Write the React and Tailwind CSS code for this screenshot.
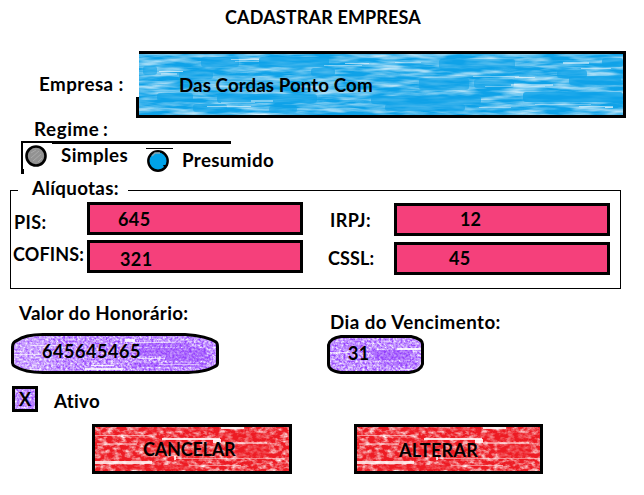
const TONES = {
  blue: { base: '#0fa2e8', freq: '0.03 0.22', seed: 7, matrix: '0 0 0 0 1  0 0 0 0 1  0 0 0 0 1  1.5 0 0 0 -0.52' },
  purple: { base: '#9440ff', freq: '0.42 0.5', seed: 3, matrix: '0 0 0 0 1  0 0 0 0 1  0 0 0 0 1  1.6 0 0 0 -0.37' },
  red: { base: '#ed1c24', freq: '0.16 0.26', seed: 12, matrix: '0 0 0 0 1  0 0 0 0 1  0 0 0 0 1  1.9 0 0 0 -0.75' },
};

// Crayon shading: a flat tone, grainy white noise and hand-placed strokes [x, y, width, height, opacity, colour].
function Crayon({ id, tone, strokes }) {
  const t = TONES[tone];
  return (
    <svg className="absolute inset-0 h-full w-full" aria-hidden="true">
      <filter id={id} x="0" y="0" width="100%" height="100%" colorInterpolationFilters="sRGB">
        <feTurbulence type="fractalNoise" baseFrequency={t.freq} numOctaves="3" seed={t.seed} />
        <feColorMatrix type="matrix" values={t.matrix} />
      </filter>
      <rect width="100%" height="100%" fill={t.base} />
      <rect width="100%" height="100%" filter={`url(#${id})`} />
      {strokes.map(([x, y, w, h, o, c], i) => (
        <rect key={i} x={x} y={y} width={w} height={h} rx={c && h > 3 ? 3 : 0} opacity={o} fill={c || '#fff'} />
      ))}
    </svg>
  );
}

const B = '#0fa2e8';
const blueStrokes = [
  [62, 3, 38, 10, 0.65, B], [120, 3, 70, 10, 0.7, B], [4, 12, 14, 9, 0.6, B], [172, 14, 24, 8, 0.65, B],
  [40, 17, 34, 8, 0.6, B], [18, 39, 36, 8, 0.7, B], [78, 40, 100, 9, 0.7, B], [54, 50, 34, 8, 0.6, B],
  [232, 42, 110, 8, 0.7, B], [246, 50, 80, 7, 0.65, B], [300, 5, 76, 10, 0.6, B], [384, 38, 100, 10, 0.8, B],
  [418, 16, 30, 8, 0.7, B], [430, 22, 52, 9, 0.7, B],
  [280, 24, 50, 12, 0.6, B], [335, 25, 40, 9, 0.6, B], [130, 52, 28, 7, 0.55, B], [463, 4, 21, 9, 0.7, B],
  [92, 5, 28, 1, 0.5], [96, 7, 24, 1, 0.35], [20, 17, 24, 1, 0.6], [22, 19, 16, 2, 0.35], [112, 46, 22, 2, 0.4],
  [68, 52, 44, 1, 0.5], [82, 48, 34, 1, 0.35], [185, 11, 38, 1, 0.4], [206, 9, 24, 1, 0.5], [256, 8, 26, 1, 0.4],
  [424, 8, 26, 2, 0.5], [442, 14, 30, 1, 0.5], [376, 23, 20, 1, 0.5], [372, 30, 42, 2, 0.45], [346, 32, 60, 1, 0.35],
  [440, 52, 34, 1, 0.5], [466, 53, 8, 1, 0.7], [334, 22, 46, 1, 0.4], [340, 53, 32, 1, 0.4], [396, 50, 56, 1, 0.35],
];
const P = '#8b31fb';
const feeStrokes = [
  [126, 10, 54, 4, 0.35, P], [128, 15, 68, 8, 0.4, P], [154, 23, 46, 5, 0.4, P], [120, 30, 76, 4, 0.35, P],
  [0, 0, 42, 42, 0.15], [114, 6, 10, 3, 0.85], [20, 12, 30, 1, 0.6], [122, 9, 42, 1, 0.55], [3, 21, 27, 1, 0.6],
  [80, 32, 23, 1, 0.85], [74, 35, 38, 2, 0.8], [128, 25, 24, 1, 0.6], [148, 31, 40, 1, 0.5], [2, 36, 28, 1, 0.6],
];
const dayStrokes = [
  [44, 15, 42, 5, 0.4, P], [48, 20, 36, 5, 0.4, P], [16, 10, 22, 4, 0.25, P], [56, 27, 34, 4, 0.3, P],
  [70, 13, 24, 2, 0.85], [3, 17, 20, 1, 0.65], [73, 34, 14, 1, 0.6], [40, 8, 20, 1, 0.35],
];
const R = '#ed1c24';
const buttonStrokes = [
  [128, 6, 50, 8, 0.4, R], [140, 17, 34, 13, 0.5, R], [55, 12, 30, 14, 0.4, R], [20, 38, 80, 5, 0.5, R],
  [40, 1, 80, 3, 0.4, R], [126, 0, 23, 2, 0.85], [67, 11, 58, 2, 0.85], [118, 12, 8, 4, 0.85],
  [0, 34, 57, 3, 0.8], [0, 8, 57, 1, 0.5], [126, 15, 46, 2, 0.5], [2, 16, 40, 2, 0.4], [79, 29, 2, 4, 0.8],
  [80, 31, 110, 1, 0.45], [94, 38, 52, 1, 0.45],
];

function Label({ className = '', children }) {
  return <span className={`block whitespace-nowrap ${className}`}>{children}</span>;
}

function RateField({ children }) {
  return <div className="w-[216px] h-[33px] border-[3px] border-black bg-[#f5407b]">{children}</div>;
}

function RoundedCrayon({ id, w, h, d, strokes, children }) {
  return (
    <div className="relative" style={{ width: w, height: h }}>
      <div className="absolute inset-0" style={{ clipPath: `path("${d}")` }}>
        <Crayon id={id} tone="purple" strokes={strokes} />
      </div>
      <svg className="absolute inset-0 overflow-visible" width={w} height={h} aria-hidden="true">
        <path d={d} fill="none" stroke="#000" strokeWidth="3" />
      </svg>
      <div className="relative">{children}</div>
    </div>
  );
}

export default function App() {
  return (
    <main className="w-[644px] h-[495px] overflow-hidden bg-white text-black font-['Lato','Carlito',sans-serif] font-bold text-[18px] leading-[24px]">
      <header className="h-[51px] pt-[5px] pl-[225px]">
        <Label className="tracking-[0.15px]">CADASTRAR EMPRESA</Label>
      </header>

      <section className="flex h-[67px]">
        <Label className="w-[136px] pl-[39px] pt-[21px] text-[18.75px] leading-[24px] tracking-[0.45px]">Empresa :</Label>
        <div className="relative w-[490px] h-[67px]">
          <div className="absolute left-[3px] top-0 w-[487px] h-[67px] border-y-[3px] border-r-[3px] border-black">
            <div className="relative h-full">
              <Crayon id="company" tone="blue" strokes={blueStrokes} />
            </div>
          </div>
          <div className="absolute left-0 bottom-0 w-[3px] h-[21px] bg-black" />
          <Label className="relative pl-[43px] pt-[22px] text-[18.75px] leading-[24px] tracking-[0.07px]">Das Cordas Ponto Com</Label>
        </div>
      </section>

      <section className="h-[59px]">
        <Label className="h-[23px] pl-[34px] text-[18.75px] leading-[21px] tracking-[0.6px] [word-spacing:-1.5px]">Regime :</Label>
        <div className="relative h-[36px] flex">
          <svg className="absolute left-0 top-0" width="300" height="36" aria-hidden="true">
            <path d="M21 0H231V3H52V2H23V28H24V33H21Z" />
            <path d="M146 7H173V8H146Z" />
            <circle cx="36" cy="15" r="9.5" fill="#929292" stroke="#000" strokeWidth="2.6" />
            <path d="M31 12l5-3M31 17l8-7M33 20l8-7M38 21l4-4" stroke="#aaa" strokeWidth="1" />
            <circle cx="158" cy="20" r="9.7" fill="#00a2e8" stroke="#000" strokeWidth="2.4" />
            <path d="M152 15l3-3h5" stroke="#8aa6b0" strokeWidth="1.4" fill="none" />
            <path d="M163 24h5l-3 4z" />
          </svg>
          <Label className="w-[122px] ml-[61px] pt-[2px] text-[18.75px] leading-[24px] tracking-[0.4px]">Simples</Label>
          <Label className="-ml-px pt-[7px] text-[18.75px] leading-[24px] tracking-[0.35px]">Presumido</Label>
        </div>
      </section>

      <fieldset className="h-[113px] w-[611px] ml-[10px] -mt-px flex">
        <div className="relative w-full h-[99px] mt-[14px] border border-black">
          <div className="absolute left-[7px] top-[-15px] w-[110px] h-[26px] bg-white pl-[14px]">
            <Label className="text-[18.75px] leading-[24px] tracking-[0.3px]">Alíquotas:</Label>
          </div>
          <div className="flex h-full">
            <div className="w-[76px] shrink-0">
              <Label className="pl-[3px] pt-[19px] tracking-[0.4px]">PIS:</Label>
              <Label className="pl-[2px] pt-[8px] tracking-[0.15px]">COFINS:</Label>
            </div>
            <div className="flex flex-col gap-[5px] pt-[11px]">
              <RateField><Label className="pl-[28px] pt-[2px] tracking-[0.4px]">645</Label></RateField>
              <RateField><Label className="pl-[30px] pt-[4px] tracking-[0.4px]">321</Label></RateField>
            </div>
            <div className="w-[91px] shrink-0">
              <Label className="pl-[27px] pt-[17px] tracking-[0.4px]">IRPJ:</Label>
              <Label className="pl-[25px] pt-[14px] tracking-[0.1px]">CSSL:</Label>
            </div>
            <div className="flex flex-col gap-[6px] pt-[12px]">
              <RateField><Label className="pl-[63px] pt-[1px]">12</Label></RateField>
              <RateField><Label className="pl-[52px] pt-[1px] tracking-[0.3px]">45</Label></RateField>
            </div>
          </div>
        </div>
      </fieldset>

      <section className="flex h-[97px]">
        <div className="w-[316px] pl-[11px] pt-[12px]">
          <Label className="pl-[8px] text-[18.75px] leading-[24px] tracking-[0.3px]">Valor do Honorário:</Label>
          <div className="pt-[8px]">
            <RoundedCrayon id="fee" w={208} h={41} d="M1.5 14Q1.5 9 6 7.5Q14 1.5 32 1.5H174Q196 3 205 9Q206.500 10 206.500 14V30Q206.500 33 203 34Q194 39.500 172 39.500H32Q14 39.500 4 33.500Q1.500 32 1.500 30Z" strokes={feeStrokes}>
              <Label className="pl-[31px] pt-[6px] tracking-[0.55px]">645645465</Label>
            </RoundedCrayon>
          </div>
        </div>
        <div className="pl-[11px] pt-[21px]">
          <Label className="pl-[3px] text-[18.75px] leading-[24px] tracking-[0.45px]">Dia do Vencimento:</Label>
          <div className="pt-px">
            <RoundedCrayon id="day" w={97} h={39} d="M1.5 10Q3 3 14 1.500H84Q95.500 4 95.500 9V29Q94 36 82 37.500H14Q1.500 36 1.500 29Z" strokes={dayStrokes}>
              <Label className="pl-[21px] pt-[6px] tracking-[0.3px]">31</Label>
            </RoundedCrayon>
          </div>
        </div>
      </section>

      <section className="flex h-[38px] pl-[12px]">
        <div className="relative w-[26px] h-[26px] border-[3px] border-black">
          <Crayon id="active" tone="purple" strokes={[[2, 2, 8, 6, 0.2, P], [12, 12, 8, 6, 0.25, P]]} />
          <Label className="relative pl-[4px] -mt-[2px]">X</Label>
        </div>
        <Label className="pl-[16px] pt-[3px] text-[18.75px] leading-[24px] tracking-[0.3px]">Ativo</Label>
      </section>

      <footer className="flex gap-[62px] pl-[92px]">
        <button className="relative w-[200px] h-[50px] border-[3px] border-black text-left">
          <Crayon id="cancel" tone="red" strokes={buttonStrokes} />
          <Label className="relative pl-[48px] tracking-[-0.2px]">CANCELAR</Label>
        </button>
        <button className="relative w-[189px] h-[50px] border-[3px] border-black text-left">
          <Crayon id="change" tone="red" strokes={buttonStrokes} />
          <Label className="relative pl-[42px] pt-[2px] tracking-[0.3px]">ALTERAR</Label>
        </button>
      </footer>
    </main>
  );
}
